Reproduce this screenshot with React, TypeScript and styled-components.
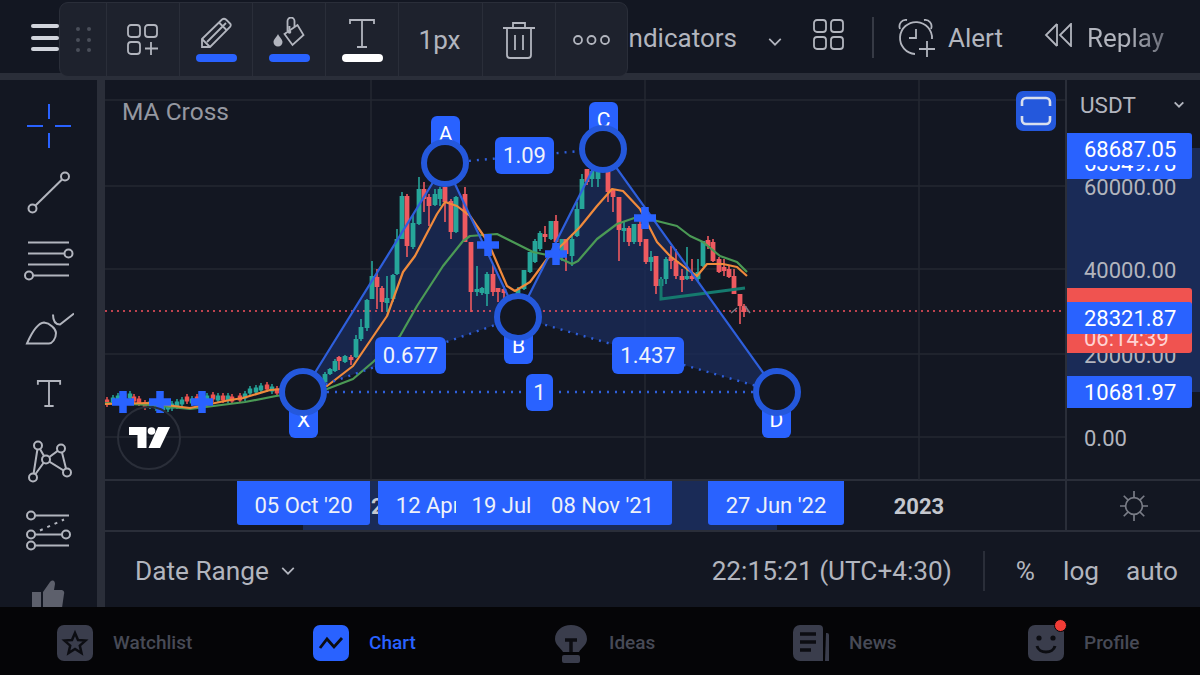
import React from 'react';
import styled, { createGlobalStyle } from 'styled-components';

const GlobalStyle = createGlobalStyle`
  html, body { margin: 0; padding: 0; background: #131722; }
  body { font-family: Roboto, "Liberation Sans", sans-serif; }
`;

const Page = styled.div`
  position: relative;
  width: 1200px;
  height: 675px;
  overflow: hidden;
  display: flex;
  flex-direction: column;
  background: #131722;
  color: #b2b5be;
`;

const Header = styled.header`
  height: 71px;
  flex: none;
  box-sizing: content-box;
  display: flex;
  align-items: center;
  padding-top: 2px;
  padding-right: 36px;
  border-bottom: 7px solid #2a2e39;
  font-size: 26px;
`;

const Burger = styled.div`
  width: 28px;
  margin-left: 31px;
  margin-right: auto;
  display: flex;
  flex-direction: column;
  gap: 7.5px;
  span { height: 4px; border-radius: 2px; background: #d1d4dc; }
`;

const HeaderLabel = styled.span<{ $gap?: number }>`
  margin-left: ${({ $gap }) => $gap ?? 0}px;
`;

const FadedLabel = styled.span`
  margin-left: 14px;
  background: linear-gradient(90deg, #b2b5be 50%, #6a6d78 100%);
  -webkit-background-clip: text;
  background-clip: text;
  color: transparent;
`;

const HeaderDivider = styled.div`
  width: 2px;
  height: 41px;
  margin: 0 24px 0 28px;
  background: #363a45;
`;

const FloatingBar = styled.div`
  position: absolute;
  left: 59px;
  top: 2px;
  width: 569px;
  height: 75px;
  box-sizing: border-box;
  display: flex;
  border: 1px solid #2a2e39;
  border-radius: 9px;
  background: #1e222d;
  z-index: 5;
`;

const BarCell = styled.div<{ $width: number; $last?: boolean }>`
  width: ${({ $width }) => $width}px;
  flex: none;
  display: flex;
  flex-direction: column;
  align-items: center;
  justify-content: center;
  box-sizing: border-box;
  border-right: ${({ $last }) => ($last ? 'none' : '1.5px solid #2a2e39')};
`;

const ColorBar = styled.div<{ $color: string }>`
  width: 41px;
  height: 8px;
  margin-top: 5px;
  border-radius: 4px;
  background: ${({ $color }) => $color};
`;

const BarText = styled.span`
  font-size: 26px;
  margin-right: 2px;
  color: #b2b5be;
`;

const Body = styled.div`
  flex: 1;
  min-height: 0;
  display: flex;
`;

const Rail = styled.nav`
  width: 97px;
  flex: none;
  box-sizing: content-box;
  padding-top: 12px;
  overflow: hidden;
  border-right: 8px solid #2a2e39;
`;

const RailItem = styled.div`
  height: 67px;
  display: flex;
  align-items: center;
  justify-content: center;
`;

const Main = styled.div`
  flex: 1;
  min-width: 0;
  display: flex;
  flex-direction: column;
`;

const Workspace = styled.div`
  height: 400px;
  flex: none;
  display: flex;
`;

const ChartPane = styled.div`
  position: relative;
  width: 960px;
  flex: none;
  overflow: hidden;
`;

const ChartSvg = styled.svg`
  position: absolute;
  inset: 0;
  display: block;
`;

const PaneTitle = styled.div`
  position: absolute;
  left: 17px;
  top: 17px;
  font-size: 24.5px;
  color: #9598a1;
`;

const FrameButton = styled.div`
  position: absolute;
  left: 911px;
  top: 11px;
  width: 40px;
  height: 40px;
  display: flex;
  align-items: center;
  justify-content: center;
  border-radius: 7px;
  background: #2458dc;
`;

const PivotTag = styled.div<{ $x: number; $y: number }>`
  position: absolute;
  left: ${({ $x }) => $x - 105}px;
  top: ${({ $y }) => $y - 81}px;
  width: 29px;
  height: 36px;
  display: flex;
  align-items: center;
  justify-content: center;
  border-radius: 6px;
  background: #2962ff;
  color: #fff;
  font-size: 21px;
`;

const PivotRing = styled.div<{ $x: number; $y: number }>`
  position: absolute;
  left: ${({ $x }) => $x - 105 - 24}px;
  top: ${({ $y }) => $y - 81 - 24}px;
  width: 48px;
  height: 48px;
  box-sizing: border-box;
  border: 6px solid #2458dc;
  border-radius: 50%;
  background: #131722;
`;

const RatioTag = styled.div<{ $x: number; $y: number; $w: number }>`
  position: absolute;
  left: ${({ $x }) => $x - 105}px;
  top: ${({ $y }) => $y - 81}px;
  width: ${({ $w }) => $w}px;
  height: 37px;
  display: flex;
  align-items: center;
  justify-content: center;
  border-radius: 6px;
  background: #2962ff;
  color: #f0f3fa;
  font-size: 22px;
`;

const LogoBadge = styled.div`
  position: absolute;
  left: 12px;
  top: 326px;
  width: 64px;
  height: 64px;
  box-sizing: border-box;
  display: flex;
  align-items: center;
  justify-content: center;
  border: 2px solid #2a2e39;
  border-radius: 50%;
`;

const PriceAxis = styled.div`
  position: relative;
  flex: 1;
  border-left: 2px solid #2a2e39;
  overflow: hidden;
`;

const CurrencyRow = styled.div`
  height: 50px;
  display: flex;
  align-items: center;
  justify-content: space-between;
  padding: 0 15px 0 13px;
  font-size: 22.5px;
`;

const RangeShade = styled.div`
  position: absolute;
  left: 0;
  right: 0;
  top: 68px;
  height: 244px;
  background: #1a2b57;
`;

const PriceText = styled.div<{ $top: number }>`
  position: absolute;
  left: 17px;
  top: ${({ $top }) => $top - 81 - 12}px;
  line-height: 28px;
  font-size: 22px;
  color: #b2b5be;
`;

const PriceTag = styled.div<{ $top: number; $height: number; $color: string }>`
  position: absolute;
  left: -2px;
  top: ${({ $top }) => $top - 81}px;
  width: 127px;
  height: ${({ $height }) => $height}px;
  box-sizing: border-box;
  padding-left: 19px;
  line-height: 34px;
  font-size: 22px;
  border-radius: 0 3px 3px 0;
  background: ${({ $color }) => $color};
  color: #fff;
`;

const CountdownText = styled.div`
  position: absolute;
  left: 17px;
  top: 245px;
  line-height: 28px;
  font-size: 22px;
  color: #ffd2d2;
`;

const TimeRow = styled.div`
  height: 53px;
  flex: none;
  display: flex;
  box-sizing: border-box;
  margin-top: -1px;
  border-top: 2px solid #2a2e39;
  border-bottom: 2px solid #2a2e39;
`;

const TimeAxis = styled.div`
  position: relative;
  width: 960px;
  flex: none;
  overflow: hidden;
`;

const TimeRange = styled.div`
  position: absolute;
  left: 198px;
  width: 474px;
  top: 0;
  bottom: 0;
  background: #1a2b57;
`;

const YearLabel = styled.div<{ $center: number }>`
  position: absolute;
  left: ${({ $center }) => $center - 105 - 40}px;
  width: 80px;
  top: 12px;
  text-align: center;
  font-size: 22px;
  font-weight: 700;
  line-height: 28px;
  color: #c4c7ce;
`;

const DateTag = styled.div<{ $left: number; $width: number }>`
  position: absolute;
  left: ${({ $left }) => $left - 105}px;
  width: ${({ $width }) => $width}px;
  top: -1px;
  height: 45px;
  line-height: 52px;
  text-align: center;
  white-space: nowrap;
  overflow: hidden;
  font-size: 22px;
  color: #eef1f8;
  background: #2962ff;
  border-radius: 0 0 3px 3px;
`;

const AxisCorner = styled.div`
  flex: 1;
  display: flex;
  align-items: center;
  justify-content: center;
  border-left: 2px solid #2a2e39;
`;

const DateBar = styled.div`
  flex: 1;
  display: flex;
  align-items: center;
  padding: 2px 22px 0 30px;
  font-size: 26.2px;
  color: #b2b5be;
`;

const RangeLabel = styled.span`
  margin-right: 11px;
`;

const ClockText = styled.span`
  margin-left: auto;
`;

const BarDivider = styled.div`
  width: 2px;
  height: 40px;
  margin: 0 31px;
  background: #2a2e39;
`;

const ScaleText = styled.span<{ $gap?: number }>`
  margin-left: ${({ $gap }) => $gap ?? 0}px;
`;

const BottomNav = styled.nav`
  height: 68px;
  flex: none;
  box-sizing: border-box;
  display: grid;
  grid-template-columns: 256px 240px 240px 235px 1fr;
  padding: 3px 0 0 57px;
  align-items: center;
  background: #050507;
`;

const NavItem = styled.div<{ $active?: boolean }>`
  display: flex;
  align-items: center;
  gap: 20px;
  font-size: 19px;
  font-weight: 500;
  color: ${({ $active }) => ($active ? '#2962ff' : '#474a56')};
`;

const NavIconWrap = styled.div`
  position: relative;
  width: 36px;
  height: 36px;
  flex: none;
`;

const RedDot = styled.div`
  position: absolute;
  right: -3px;
  top: -6px;
  width: 11px;
  height: 11px;
  border-radius: 50%;
  background: #f23c36;
  border: 1px solid #050507;
`;

const gray = '#b2b5be';

// x, wick top, wick bottom, body top, body bottom, up?
type Candle = [number, number, number, number, number, boolean];
const candles: Candle[] = [
  [325, 373, 384, 375, 383, true], [330, 369, 376, 370, 375, true], [335, 360, 373, 362, 372, true],
  [339, 357, 371, 358, 362, false], [345, 356, 364, 357, 363, true], [351, 356, 366, 358, 361, false],
  [356, 336, 359, 340, 358, true], [361, 320, 342, 328, 340, true], [367, 300, 332, 301, 329, true],
  [372, 262, 300, 277, 300, true], [377, 270, 310, 278, 288, false], [382, 287, 313, 289, 303, false],
  [387, 277, 313, 299, 304, true], [393, 275, 303, 276, 300, true], [397, 230, 276, 240, 275, true],
  [402, 193, 240, 197, 240, true], [407, 195, 258, 197, 247, false], [413, 215, 250, 224, 248, true],
  [419, 178, 226, 190, 225, true], [424, 183, 213, 190, 200, false], [429, 195, 227, 198, 207, false],
  [435, 190, 207, 195, 206, true], [440, 188, 207, 190, 200, true], [445, 188, 223, 188, 203, false],
  [451, 200, 240, 202, 233, false], [456, 197, 234, 198, 233, true], [465, 188, 243, 195, 243, false],
  [471, 243, 313, 243, 293, false], [477, 267, 297, 290, 293, true], [482, 288, 296, 289, 294, true],
  [487, 273, 307, 275, 295, true], [493, 265, 297, 275, 293, false], [498, 289, 303, 289, 293, false],
  [504, 287, 300, 290, 294, false], [518, 288, 297, 290, 295, true], [524, 271, 291, 271, 290, true],
  [530, 253, 274, 253, 273, true], [535, 240, 264, 242, 263, true], [540, 232, 252, 234, 250, true],
  [545, 227, 243, 235, 238, false], [551, 222, 241, 222, 240, true], [556, 216, 247, 222, 243, false],
  [562, 240, 262, 240, 258, true], [566, 240, 272, 240, 255, false], [572, 235, 267, 240, 257, true],
  [577, 203, 238, 210, 237, true], [582, 175, 210, 180, 210, true], [587, 170, 186, 170, 183, false],
  [592, 170, 188, 172, 180, true], [598, 170, 188, 172, 180, true], [608, 170, 203, 172, 193, false],
  [613, 190, 213, 190, 198, false], [619, 198, 262, 198, 231, false], [624, 222, 243, 229, 232, true],
  [629, 227, 247, 229, 243, false], [634, 225, 245, 225, 243, true], [640, 222, 247, 225, 243, false],
  [646, 240, 265, 240, 263, false], [651, 252, 272, 258, 263, true], [656, 257, 295, 257, 287, false],
  [661, 278, 300, 280, 287, true], [666, 258, 285, 260, 280, true], [671, 247, 270, 258, 262, false],
  [676, 250, 280, 262, 277, false], [682, 270, 293, 277, 281, false], [687, 248, 281, 277, 280, true],
  [692, 260, 282, 277, 280, false], [698, 260, 282, 273, 280, true], [703, 242, 268, 242, 267, true],
  [708, 237, 250, 241, 247, false], [713, 240, 263, 243, 262, false], [719, 258, 274, 260, 273, false],
  [724, 260, 277, 268, 272, false], [729, 266, 279, 270, 278, false], [734, 270, 295, 277, 295, false],
  [740, 295, 325, 295, 307, false], [744, 305, 318, 307, 313, false],
];

// the flat stretch before X: x, mid y, up?
const flatCandles: [number, number, boolean][] = [
  [107, 403, false], [113, 401, true], [118, 399, true], [124, 397, false], [130, 397, true], [134, 400, false],
  [139, 402, false], [145, 406, false], [150, 405, true], [156, 407, true], [163, 409, true], [168, 408, true],
  [172, 407, true], [177, 405, true], [182, 403, true], [187, 400, false], [192, 402, true], [197, 400, false],
  [207, 399, true], [213, 398, false], [218, 399, true], [223, 399, false], [228, 399, true], [232, 400, false],
  [240, 399, false], [245, 397, true], [250, 392, true], [256, 391, true], [261, 389, true], [267, 388, false],
  [272, 390, true], [277, 392, false],
];

const orangeLine = 'M105 405 L150 404 L190 409 L230 401 L243 399 L270 391 L283 390 L327 387 L353 367 L387 317 L403 273 L415 257 L437 215 L445 203 L457 207 L470 217 L488 243 L507 287 L515 292 L530 283 L547 260 L563 245 L580 228 L597 207 L612 190 L623 192 L640 210 L657 243 L670 257 L687 270 L697 277 L707 265 L723 265 L737 268 L747 277';
const greenLine = 'M105 404 L150 406 L190 410 L245 403 L276 397 L327 390 L353 380 L373 363 L400 337 L417 307 L443 267 L463 242 L470 237 L497 235 L513 243 L533 253 L557 258 L572 265 L578 262 L597 240 L617 225 L640 217 L657 222 L677 227 L690 237 L703 243 L720 257 L737 263 L747 273';

const plusMarks: [number, number][] = [[123, 403], [160, 403], [202, 403], [488, 246], [556, 255], [645, 219]];

const LayoutPlusIcon = () => (
  <svg width="32" height="32" viewBox="0 0 32 32" fill="none" stroke={gray} strokeWidth="1.8">
    <rect x="1" y="1" width="12" height="12" rx="3" />
    <rect x="18" y="1" width="12" height="12" rx="3" />
    <rect x="1" y="18" width="12" height="12" rx="3" />
    <path d="M24 18v13M18 24.5h13" />
  </svg>
);

const PencilIcon = () => (
  <svg width="32" height="32" viewBox="0 0 32 32" fill="none" stroke={gray} strokeWidth="1.8">
    <path d="M2 30V22L22 2.500Q24 1 26 2.500L30 6.500Q31.500 8 30 10L10 30Z" />
    <path d="M2 22l8 8M7 25L26 6M19 5.500l8 8" />
  </svg>
);

const BucketIcon = () => (
  <svg width="34" height="32" viewBox="0 0 34 32" fill="none" stroke={gray} strokeWidth="1.8">
    <path d="M12.500 17L25.500 8L31.500 18L20.500 28Z" />
    <path d="M15.500 14V4a3.500 3.500 0 0 1 7 0V10M17.500 9V14" />
    <circle cx="17.500" cy="15" r="1.800" fill={gray} stroke="none" />
    <path d="M6 17C5 20 1.500 22 1.500 25a4.500 4.500 0 0 0 9 0C10.500 22 7 20 6 17Z" fill={gray} stroke="none" />
  </svg>
);

const SerifT = ({ size = 28, stroke = gray, width = 1.8 }: { size?: number; stroke?: string; width?: number }) => (
  <svg width={size} height={size + 3} viewBox="0 0 28 31" fill="none" stroke={stroke} strokeWidth={width}>
    <path d="M2 6V2h24v4M14 2v27M9 29h10" />
  </svg>
);

const TrashIcon = () => (
  <svg width="34" height="38" viewBox="0 0 34 38" fill="none" stroke={gray} strokeWidth="1.8">
    <path d="M1 7h32M11 7V2h12v5M5 7v27a3 3 0 0 0 3 3h18a3 3 0 0 0 3-3V7M13 14v15M21 14v15" />
  </svg>
);

const DotsIcon = () => (
  <svg width="37" height="12" viewBox="0 0 37 12" fill="none" stroke={gray} strokeWidth="1.8">
    <circle cx="5" cy="6" r="4" />
    <circle cx="18.500" cy="6" r="4" />
    <circle cx="32" cy="6" r="4" />
  </svg>
);

const GripIcon = () => (
  <svg width="16" height="26" viewBox="0 0 16 26" fill="#4a4e59">
    {[2, 13, 23].map((y) => (
      <React.Fragment key={y}>
        <circle cx="3" cy={y} r="2" />
        <circle cx="14" cy={y} r="2" />
      </React.Fragment>
    ))}
  </svg>
);

const ChevronIcon = ({ size = 16, width = 1.8 }: { size?: number; width?: number }) => (
  <svg width={size} height={size * 0.6} viewBox="0 0 16 10" fill="none" stroke={gray} strokeWidth={width}>
    <path d="M2 2l6 6 6-6" />
  </svg>
);

const GridIcon = () => (
  <svg width="31" height="31" viewBox="0 0 31 31" fill="none" stroke={gray} strokeWidth="1.8">
    <rect x="1" y="1" width="12" height="12" rx="3" />
    <rect x="18" y="1" width="12" height="12" rx="3" />
    <rect x="1" y="18" width="12" height="12" rx="3" />
    <rect x="18" y="18" width="12" height="12" rx="3" />
  </svg>
);

const AlarmIcon = () => (
  <svg width="38" height="39" viewBox="0 0 38 39" fill="none" stroke={gray} strokeWidth="1.8">
    <path d="M2 11C0 6 4 1 9 2M26 2c5-1 9 4 7 9M18 11v9h-7" />
    <path d="M34 21A16 16 0 1 0 17 36" />
    <path d="M29 23v16M21 31h16" />
  </svg>
);

const RewindIcon = () => (
  <svg width="29" height="24" viewBox="0 0 29 24" fill="none" stroke={gray} strokeWidth="1.8">
    <path d="M13 1L2 12l11 11M27 1L16 12l11 11z" />
    <path d="M13 1v22" />
  </svg>
);

const FrameIcon = () => (
  <svg width="32" height="30" viewBox="0 0 32 30" fill="none" stroke="#d8dfee" strokeWidth="2.6">
    <path d="M2 10V6a4 4 0 0 1 4-4h20a4 4 0 0 1 4 4v4M2 20v4a4 4 0 0 0 4 4h20a4 4 0 0 0 4-4v-4" />
  </svg>
);

const SunIcon = () => (
  <svg width="28" height="30" viewBox="0 0 30 32" fill="none" stroke="#797c86" strokeWidth="1.8">
    <circle cx="15" cy="16" r="9" />
    <path d="M15 0v7M15 25v7M0 16h6M24 16h6M4 5l5 5M26 5l-5 5M4 27l5-5M26 27l-5-5" />
  </svg>
);

const CrossIcon = () => (
  <svg width="50" height="50" viewBox="0 0 50 50" fill="none" stroke="#2962ff" strokeWidth="2">
    <path d="M25 3v15M25 32v15M3 25h16M31 25h16" />
  </svg>
);

const TrendIcon = () => (
  <svg width="50" height="50" viewBox="0 0 50 50" fill="none" stroke={gray} strokeWidth="2">
    <circle cx="8.500" cy="40.500" r="4" />
    <circle cx="41" cy="8.500" r="4" />
    <path d="M11.500 37.500L38 11.500" />
  </svg>
);

const FibIcon = () => (
  <svg width="50" height="50" viewBox="0 0 50 50" fill="none" stroke={gray} strokeWidth="2">
    <path d="M4 7.500h41M4 18.500h37M4 29.500h41M9 40.500h36" />
    <circle cx="44.500" cy="18.500" r="4" />
    <circle cx="5" cy="40.500" r="4" />
  </svg>
);

const BrushIcon = () => (
  <svg width="50" height="50" viewBox="0 0 50 50" fill="none" stroke={gray} strokeWidth="2">
    <path d="M3 41.500C8 30 14 21 20 20.500C26 21 32 27 32 31C32 37 28 41.500 25 41.500Z" />
    <path d="M29 12.500C29 17 30 22.500 36 22.500L50 11.500" />
  </svg>
);

const PatternIcon = () => (
  <svg width="50" height="50" viewBox="0 0 50 50" fill="none" stroke={gray} strokeWidth="2">
    <path d="M14 9.500L9 41.500L22 23.500L37 12.500L43 36.500L22 23.500L14 9.500" />
    <circle cx="14" cy="9.500" r="4" fill="#131722" />
    <circle cx="37" cy="12.500" r="4" fill="#131722" />
    <circle cx="22" cy="23.500" r="4" fill="#131722" />
    <circle cx="9" cy="41.500" r="4" fill="#131722" />
    <circle cx="43" cy="36.500" r="4" fill="#131722" />
  </svg>
);

const ForecastIcon = () => (
  <svg width="50" height="50" viewBox="0 0 50 50" fill="none" stroke={gray} strokeWidth="2">
    <path d="M11 12.500h34M11 31.500h27M11 42.500h34" />
    <path d="M16 27.500L40 16.500" strokeDasharray="3 5" />
    <circle cx="7" cy="12.500" r="4" />
    <circle cx="7" cy="31.500" r="4" />
    <circle cx="42" cy="31.500" r="4" />
    <circle cx="7" cy="42.500" r="4" />
  </svg>
);

const ThumbIcon = () => (
  <svg width="50" height="50" viewBox="0 0 50 50" fill="#5d606c">
    <rect x="8" y="22" width="9" height="16" />
    <path d="M19 22L26 12C29 9 31 11 31 14L30 20L38 20Q41 21 40 24L38 38H19Z" />
  </svg>
);

const navTile = '#3a3d4c';

const StarTile = () => (
  <svg width="36" height="36" viewBox="0 0 36 36">
    <rect width="36" height="36" rx="7" fill={navTile} />
    <path d="M18 8l3 7 7.500.6-5.700 5 1.700 7.400L18 24l-6.500 4 1.700-7.400-5.700-5L15 15z" fill="none" stroke="#0c0d12" strokeWidth="2.500" />
  </svg>
);

const ChartTile = () => (
  <svg width="36" height="36" viewBox="0 0 36 36">
    <rect width="36" height="36" rx="7" fill="#2962ff" />
    <path d="M7 23l7-9 7 8 8-9" fill="none" stroke="#0c0d12" strokeWidth="2.800" />
  </svg>
);

const BulbTile = () => (
  <svg width="36" height="38" viewBox="0 0 36 38">
    <path d="M18 0C27 0 34 6 34 14C34 20 28 23 26 27H10C8 23 2 20 2 14C2 6 9 0 18 0Z" fill={navTile} />
    <rect x="9" y="30" width="18" height="8" rx="2" fill={navTile} />
    <path d="M12 15h12M18 15v12" stroke="#0c0d12" strokeWidth="3.500" fill="none" />
  </svg>
);

const NewsTile = () => (
  <svg width="36" height="36" viewBox="0 0 36 36">
    <path d="M7 0H26a4 4 0 0 1 4 4V36H7a7 7 0 0 1-7-7V7a7 7 0 0 1 7-7Z" fill={navTile} />
    <path d="M33 8h1a2 2 0 0 1 2 2V36H32Z" fill={navTile} />
    <path d="M7 9h16M7 17h16M7 25h11" stroke="#0c0d12" strokeWidth="3.500" />
  </svg>
);

const SmileTile = () => (
  <svg width="36" height="36" viewBox="0 0 36 36">
    <rect width="36" height="36" rx="7" fill={navTile} />
    <circle cx="11" cy="13" r="2.600" fill="#0c0d12" />
    <circle cx="25" cy="13" r="2.600" fill="#0c0d12" />
    <path d="M9 21c2 8 16 8 18 0" fill="none" stroke="#0c0d12" strokeWidth="3" />
  </svg>
);

const TvLogo = () => (
  <svg width="41" height="22" viewBox="0 0 41 22" fill="#fff">
    <path d="M0 0h17.500v21H8.500V8H0z" />
    <circle cx="22.500" cy="4" r="3.800" />
    <path d="M29 0h12L31 21H19.500z" />
  </svg>
);

const App: React.FC = () => {
  return (
    <Page>
      <GlobalStyle />
      <Header>
        <Burger>
          <span />
          <span />
          <span />
        </Burger>
        <HeaderLabel>Indicators</HeaderLabel>
        <HeaderLabel $gap={30} as="div">
          <ChevronIcon />
        </HeaderLabel>
        <HeaderLabel $gap={30} as="div">
          <GridIcon />
        </HeaderLabel>
        <HeaderDivider />
        <AlarmIcon />
        <HeaderLabel $gap={12}>Alert</HeaderLabel>
        <HeaderLabel $gap={41} as="div">
          <RewindIcon />
        </HeaderLabel>
        <FadedLabel>Replay</FadedLabel>
      </Header>

      <FloatingBar>
        <BarCell $width={47}>
          <GripIcon />
        </BarCell>
        <BarCell $width={73}>
          <LayoutPlusIcon />
        </BarCell>
        <BarCell $width={73}>
          <PencilIcon />
          <ColorBar $color="#2962ff" />
        </BarCell>
        <BarCell $width={73}>
          <BucketIcon />
          <ColorBar $color="#2962ff" />
        </BarCell>
        <BarCell $width={73}>
          <SerifT />
          <ColorBar $color="#ffffff" />
        </BarCell>
        <BarCell $width={84}>
          <BarText>1px</BarText>
        </BarCell>
        <BarCell $width={73}>
          <TrashIcon />
        </BarCell>
        <BarCell $width={71} $last>
          <DotsIcon />
        </BarCell>
      </FloatingBar>

      <Body>
        <Rail>
          <RailItem><CrossIcon /></RailItem>
          <RailItem><TrendIcon /></RailItem>
          <RailItem><FibIcon /></RailItem>
          <RailItem><BrushIcon /></RailItem>
          <RailItem><SerifT size={26} width={2} /></RailItem>
          <RailItem><PatternIcon /></RailItem>
          <RailItem><ForecastIcon /></RailItem>
          <RailItem><ThumbIcon /></RailItem>
        </Rail>

        <Main>
          <Workspace>
            <ChartPane>
              <ChartSvg width="960" height="400" viewBox="105 81 960 400">
                <g stroke="#242832" strokeWidth="1.500">
                  {[101, 187, 270, 355, 438].map((y) => (
                    <line key={y} x1="105" x2="1065" y1={y} y2={y} />
                  ))}
                  {[371, 645, 919].map((x) => (
                    <line key={x} x1={x} x2={x} y1="81" y2="481" />
                  ))}
                </g>
                <path d="M303 393L445 164L518 318Z M518 318L603 150L777 393Z" fill="#1a2b57" fillOpacity="0.8" />
                <line x1="105" x2="1065" y1="312" y2="312" stroke="#f7525f" strokeWidth="1.500" strokeDasharray="2 4" />
                {flatCandles.map(([x, y, up]) => (
                  <g key={x} stroke={up ? '#26a69a' : '#ef5350'}>
                    <line x1={x} x2={x} y1={y - 5} y2={y + 5} strokeWidth="1.500" />
                    <line x1={x} x2={x} y1={y - 2.500} y2={y + 2.500} strokeWidth="4.500" />
                  </g>
                ))}
                {candles.map(([x, wt, wb, bt, bb, up]) => (
                  <g key={x} stroke={up ? '#26a69a' : '#ee5a60'}>
                    <line x1={x} x2={x} y1={wt} y2={wb} strokeWidth="1.600" />
                    <line x1={x} x2={x} y1={bt} y2={bb} strokeWidth="4.800" />
                  </g>
                ))}
                <path d={greenLine} fill="none" stroke="#4b9a55" strokeWidth="2.200" strokeLinejoin="round" />
                <path d={orangeLine} fill="none" stroke="#f08a3c" strokeWidth="2.200" strokeLinejoin="round" />
                <path d="M661 280V300L745 289" fill="none" stroke="#157a6e" strokeWidth="3" />
                <path d="M731 314l6-5M745 307l5 7" fill="none" stroke="#787b86" strokeWidth="1.500" />
                <path d="M303 393L445 164L518 318L603 150L777 393" fill="none" stroke="#2e5fdc" strokeWidth="2.200" />
                <path d="M303 393L518 318L777 393M445 164L603 150M303 393H777" fill="none" stroke="#2e5fdc" strokeWidth="2.400" strokeDasharray="2 6" />
                {plusMarks.map(([x, y]) => (
                  <path key={x} d={`M${x - 11} ${y}h22M${x} ${y - 11}v22`} stroke="#2962ff" strokeWidth="7.500" />
                ))}
              </ChartSvg>

              <PaneTitle>MA Cross</PaneTitle>
              <FrameButton><FrameIcon /></FrameButton>
              <LogoBadge><TvLogo /></LogoBadge>

              <PivotTag $x={431} $y={117}>A</PivotTag>
              <PivotTag $x={589} $y={103}>C</PivotTag>
              <PivotTag $x={504} $y={329}>B</PivotTag>
              <PivotTag $x={289} $y={403}>X</PivotTag>
              <PivotTag $x={762} $y={403}>D</PivotTag>
              <PivotRing $x={445} $y={164} />
              <PivotRing $x={603} $y={150} />
              <PivotRing $x={518} $y={318} />
              <PivotRing $x={303} $y={393} />
              <PivotRing $x={777} $y={393} />

              <RatioTag $x={495} $y={138} $w={59}>1.09</RatioTag>
              <RatioTag $x={375} $y={338} $w={71}>0.677</RatioTag>
              <RatioTag $x={612} $y={338} $w={72}>1.437</RatioTag>
              <RatioTag $x={526} $y={375} $w={27}>1</RatioTag>
            </ChartPane>

            <PriceAxis>
              <CurrencyRow>
                <span>USDT</span>
                <ChevronIcon size={12} width={2.600} />
              </CurrencyRow>
              <RangeShade />
              <PriceText $top={187}>60000.00</PriceText>
              <PriceText $top={270}>40000.00</PriceText>
              <PriceText $top={355}>20000.00</PriceText>
              <PriceText $top={438}>0.00</PriceText>
              <PriceTag $top={148} $height={32} $color="#2962ff">63349.78</PriceTag>
              <PriceTag $top={134} $height={32} $color="#2962ff">68687.05</PriceTag>
              <PriceTag $top={289} $height={65} $color="#f05350" />
              <CountdownText>06:14:39</CountdownText>
              <PriceTag $top={303} $height={32} $color="#2962ff">28321.87</PriceTag>
              <PriceTag $top={377} $height={32} $color="#2962ff">10681.97</PriceTag>
            </PriceAxis>
          </Workspace>

          <TimeRow>
            <TimeAxis>
              <TimeRange />
              <YearLabel $center={371}>2021</YearLabel>
              <YearLabel $center={919}>2023</YearLabel>
              <DateTag $left={237} $width={133}>05 Oct '20</DateTag>
              <DateTag $left={378} $width={134}>12 Apr '21</DateTag>
              <DateTag $left={456} $width={125}>19 Jul '21</DateTag>
              <DateTag $left={533} $width={139}>08 Nov '21</DateTag>
              <DateTag $left={708} $width={136}>27 Jun '22</DateTag>
            </TimeAxis>
            <AxisCorner><SunIcon /></AxisCorner>
          </TimeRow>

          <DateBar>
            <RangeLabel>Date Range</RangeLabel>
            <ChevronIcon />
            <ClockText>22:15:21 (UTC+4:30)</ClockText>
            <BarDivider />
            <ScaleText>%</ScaleText>
            <ScaleText $gap={28}>log</ScaleText>
            <ScaleText $gap={27}>auto</ScaleText>
          </DateBar>
        </Main>
      </Body>

      <BottomNav>
        <NavItem>
          <NavIconWrap><StarTile /></NavIconWrap>
          Watchlist
        </NavItem>
        <NavItem $active>
          <NavIconWrap><ChartTile /></NavIconWrap>
          Chart
        </NavItem>
        <NavItem>
          <NavIconWrap><BulbTile /></NavIconWrap>
          Ideas
        </NavItem>
        <NavItem>
          <NavIconWrap><NewsTile /></NavIconWrap>
          News
        </NavItem>
        <NavItem>
          <NavIconWrap>
            <SmileTile />
            <RedDot />
          </NavIconWrap>
          Profile
        </NavItem>
      </BottomNav>
    </Page>
  );
};

export default App;
